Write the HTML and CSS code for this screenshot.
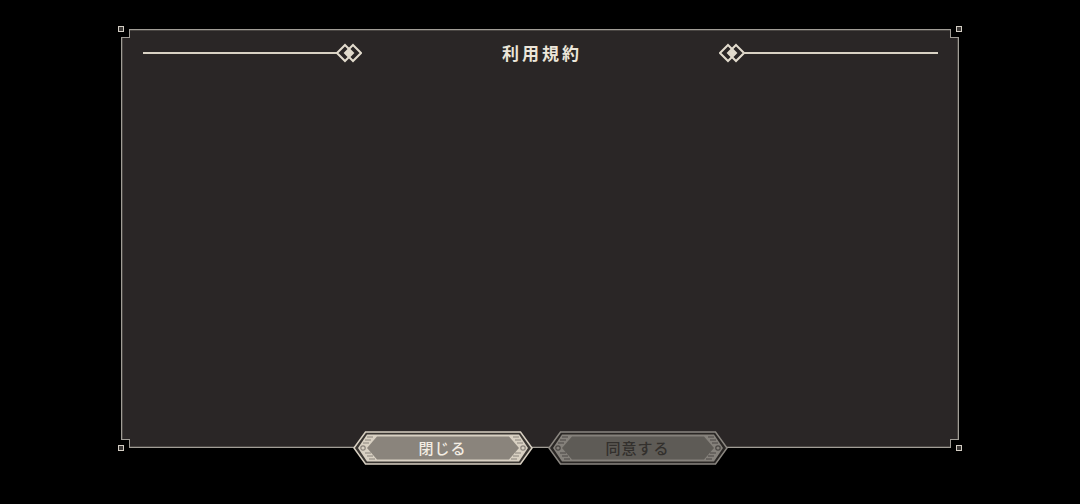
FILE: index.html
```html
<!DOCTYPE html>
<html lang="ja">
<head>
  <meta charset="UTF-8" />
  <meta name="viewport" content="width=device-width, initial-scale=1" />
  <title>利用規約</title>
  <link rel="stylesheet" href="styles.css">
</head>
<body>
  <main class="dialog" role="dialog" aria-labelledby="dialog-title">
    <!-- esquinas recortadas -->
    <span class="notch tl"></span><span class="notch tr"></span>
    <span class="notch bl"></span><span class="notch br"></span>
    <span class="stud tl"></span><span class="stud tr"></span>
    <span class="stud bl"></span><span class="stud br"></span>

    <header class="dialog-head">
      <div class="head-side left">
        <span class="rule"></span>
        <svg class="ornament" width="26" height="20" viewBox="0 0 26 20" aria-hidden="true">
          <path d="M9 2 L17 10 L9 18 L1 10 Z" fill="none" stroke="#e2dbcd" stroke-width="2"/>
          <path d="M17 2 L25 10 L17 18 L9 10 Z" fill="none" stroke="#e2dbcd" stroke-width="2"/>
          <path d="M13 6.5 L16.5 10 L13 13.5 L9.5 10 Z" fill="#e2dbcd"/>
        </svg>
      </div>
      <h1 id="dialog-title">利用規約</h1>
      <div class="head-side right">
        <svg class="ornament" width="26" height="20" viewBox="0 0 26 20" aria-hidden="true">
          <path d="M9 2 L17 10 L9 18 L1 10 Z" fill="none" stroke="#e2dbcd" stroke-width="2"/>
          <path d="M17 2 L25 10 L17 18 L9 10 Z" fill="none" stroke="#e2dbcd" stroke-width="2"/>
          <path d="M13 6.5 L16.5 10 L13 13.5 L9.5 10 Z" fill="#e2dbcd"/>
        </svg>
        <span class="rule"></span>
      </div>
    </header>

    <section class="dialog-body"></section>

    <footer class="dialog-actions">
      <button class="btn btn-close" type="button">
        <svg class="btn-shape" viewBox="0 0 180 34" preserveAspectRatio="none" aria-hidden="true">
          <polygon points="1,17 12.5,1 167.5,1 179,17 167.5,33 12.5,33" fill="#3a3632" stroke="#d9d1c3" stroke-width="1.5"/>
          <polygon points="5,17 14,3.5 166,3.5 175,17 166,30.5 14,30.5" fill="#d9d1c3"/>
          <polygon points="24,5.5 156,5.5 166,17 156,28.5 24,28.5 14,17" fill="#8a847c"/>
          <g stroke="#8a847c" stroke-width="1.2">
            <path d="M14 6 L20 6 M12 9 L18 9 M10 12 L16 12 M12 22 L18 22 M14 25 L20 25 M16 28 L22 28"/>
            <path d="M166 6 L160 6 M168 9 L162 9 M170 12 L164 12 M168 22 L162 22 M166 25 L160 25 M164 28 L158 28"/>
          </g>
          <circle cx="10" cy="17" r="2.2" fill="none" stroke="#8a847c" stroke-width="1.2"/>
          <circle cx="170" cy="17" r="2.2" fill="none" stroke="#8a847c" stroke-width="1.2"/>
        </svg>
        <span class="btn-label">閉じる</span>
      </button>
      <button class="btn btn-agree" type="button" disabled>
        <svg class="btn-shape" viewBox="0 0 180 34" preserveAspectRatio="none" aria-hidden="true">
          <polygon points="1,17 12.5,1 167.5,1 179,17 167.5,33 12.5,33" fill="#2a2725" stroke="#8b8781" stroke-width="1.5"/>
          <polygon points="5,17 14,3.5 166,3.5 175,17 166,30.5 14,30.5" fill="#85817b"/>
          <polygon points="24,5.5 156,5.5 166,17 156,28.5 24,28.5 14,17" fill="#5e5b56"/>
          <g stroke="#4a4744" stroke-width="1.2">
            <path d="M14 6 L20 6 M12 9 L18 9 M10 12 L16 12 M12 22 L18 22 M14 25 L20 25 M16 28 L22 28"/>
            <path d="M166 6 L160 6 M168 9 L162 9 M170 12 L164 12 M168 22 L162 22 M166 25 L160 25 M164 28 L158 28"/>
          </g>
          <circle cx="10" cy="17" r="2.2" fill="none" stroke="#4a4744" stroke-width="1.2"/>
          <circle cx="170" cy="17" r="2.2" fill="none" stroke="#4a4744" stroke-width="1.2"/>
        </svg>
        <span class="btn-label">同意する</span>
      </button>
    </footer>
  </main>
</body>
</html>
```

FILE: styles.css
```css
* {
  box-sizing: border-box;
}
body {
  margin: 0;
  height: 100vh;
  background: #000;
  font-family: "Noto Sans CJK JP", "Noto Sans", sans-serif;
  display: flex;
  justify-content: center;
  padding-top: 29px;
}

/* Marco del diálogo */
.dialog {
  position: relative;
  width: 838px;
  height: 419px;
  background: #2a2626;
  border: 1px solid #a19d96;
  box-shadow: inset 0 0 0 1px #4a4643;
  display: flex;
  flex-direction: column;
}
.notch {
  position: absolute;
  width: 9px;
  height: 9px;
  background: #000;
  border: 0 solid #a19d96;
}
.notch.tl { top: -1px; left: -1px; border-right-width: 1px; border-bottom-width: 1px; }
.notch.tr { top: -1px; right: -1px; border-left-width: 1px; border-bottom-width: 1px; }
.notch.bl { bottom: -1px; left: -1px; border-right-width: 1px; border-top-width: 1px; }
.notch.br { bottom: -1px; right: -1px; border-left-width: 1px; border-top-width: 1px; }
.stud {
  position: absolute;
  width: 6px;
  height: 6px;
  background: #3a3735;
  border: 1.5px solid #d4cec4;
}
.stud.tl { top: -4px; left: -4px; }
.stud.tr { top: -4px; right: -4px; }
.stud.bl { bottom: -4px; left: -4px; }
.stud.br { bottom: -4px; right: -4px; }

/* Cabecera */
.dialog-head {
  display: grid;
  grid-template-columns: 1fr auto 1fr;
  align-items: center;
  padding: 11px 20px 0 21px;
}
.dialog-head h1 {
  margin: 0;
  font-size: 17px;
  font-weight: 700;
  letter-spacing: 3px;
  padding-left: 3px;
  line-height: 24px;
  color: #ece6da;
}
.head-side {
  display: flex;
  align-items: center;
}
.head-side.left { margin-right: 137px; }
.head-side.right { margin-left: 137px; }
.rule {
  flex: 1;
  height: 2px;
  background: #d9d2c4;
}
.ornament {
  display: block;
  flex: none;
}
.head-side.left .ornament { margin-left: -2px; }
.head-side.right .ornament { margin-right: -2px; }

.dialog-body {
  flex: 1;
}

/* Botones */
.dialog-actions {
  display: flex;
  justify-content: center;
  gap: 15px;
  margin-bottom: -18px;
}
.btn {
  position: relative;
  width: 180px;
  height: 34px;
  padding: 0;
  border: 0;
  background: transparent;
  font-family: inherit;
  font-size: 15px;
  font-weight: 500;
  letter-spacing: 1px;
  cursor: pointer;
}
.btn-shape {
  position: absolute;
  inset: 0;
  width: 100%;
  height: 100%;
}
.btn-label {
  position: relative;
  line-height: 34px;
}
.btn-close { color: #f3ede3; }
.btn-agree { color: #33302d; cursor: default; }
```
